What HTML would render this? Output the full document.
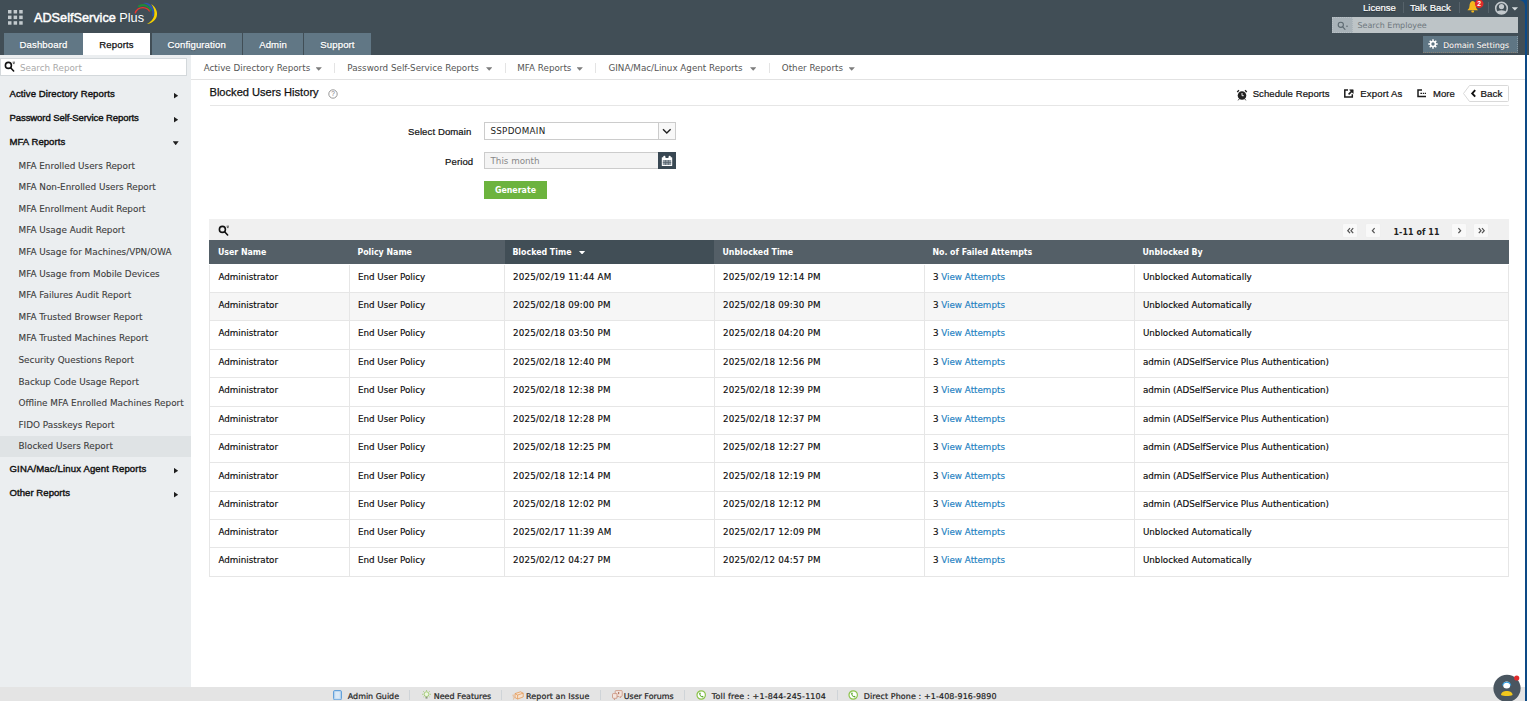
<!DOCTYPE html>
<html lang="en">
<head>
<meta charset="utf-8">
<title>ADSelfService Plus - Blocked Users History</title>
<style>
*{box-sizing:border-box;margin:0;padding:0}
html,body{width:1529px;height:701px;overflow:hidden;background:#fff}
body{position:relative;font-family:"DejaVu Sans","Liberation Sans",sans-serif;font-size:8.76px;color:#222;line-height:1}
.abs{position:absolute;white-space:nowrap}
.lato{font-family:"Liberation Sans","DejaVu Sans",sans-serif}
/* header */
#hdr{position:absolute;left:0;top:0;width:1529px;height:55px;background:linear-gradient(#414e56,#414e56) 0 0/1525px 55px no-repeat,linear-gradient(#414e56,#414e56) 1527px 0/2px 55px no-repeat,#0d4a86}
.tab{position:absolute;top:33px;height:22px;background:#617785;color:#fff;font-family:"Liberation Sans",sans-serif;font-size:9.55px;text-align:center;line-height:24px;letter-spacing:0.12px;-webkit-text-stroke:0.25px #fff;text-shadow:0 0.5px 1px rgba(0,0,0,.35)}
.tab.on{background:#fff;color:#111;-webkit-text-stroke:0.25px #111;text-shadow:none}
/* subnav */
#subnav{position:absolute;left:191px;top:55px;width:1334px;height:25px;background:#fff;border-bottom:1px solid #e2e2e2}
.sn{position:absolute;top:9px;color:#555;white-space:nowrap}
.caret{position:absolute;width:6.4px;height:3.4px;background:#7d7d7d;clip-path:polygon(0 0,100% 0,50% 100%)}
.vsep{position:absolute;top:8px;width:1px;height:9.5px;background:#e4e4e4}
/* sidebar */
#side{position:absolute;left:0;top:55px;width:191px;height:632px;background:#ebeef0}
.sh{position:absolute;left:9.5px;font-family:"Liberation Sans",sans-serif;font-weight:400;font-size:9.55px;letter-spacing:0.05px;color:#111;-webkit-text-stroke:0.4px #111;white-space:nowrap;margin-top:0.4px}
.si{position:absolute;left:18.5px;color:#3c3c3c;-webkit-text-stroke:0.1px #3c3c3c;white-space:nowrap;font-size:8.85px;margin-top:1px}
.arr-r{position:absolute;left:173.8px;width:4.4px;height:5.8px;background:#1e1e1e;clip-path:polygon(0 0,100% 50%,0 100%);margin-top:0.3px}
.arr-d{position:absolute;left:172.7px;width:6px;height:4px;background:#1e1e1e;clip-path:polygon(0 0,100% 0,50% 100%);margin-top:0.2px}
/* table */
#tbl{position:absolute;left:209.4px;top:240.4px;width:1299.6px}
.th{position:absolute;top:-0.4px;height:24px;background:#545f67;color:#fff;font-family:"DejaVu Sans Condensed","DejaVu Sans",sans-serif;font-weight:700;font-size:8.76px;line-height:24.4px;padding-left:8.5px;white-space:nowrap}
.row{position:absolute;left:0;width:1299.6px;height:28.35px;border-bottom:1px solid #e6e6e6;border-left:1px solid #e6e6e6;border-right:1px solid #e6e6e6}
.row span{position:absolute;top:0;height:28.35px;line-height:24.2px;padding-left:8px;border-left:1px solid #e6e6e6;white-space:nowrap;color:#0a0a0a;-webkit-text-stroke:0.15px #0a0a0a}
.row span:first-child{border-left:none;padding-left:9px}
.row.dn span{line-height:26.2px}
.row a{color:#1e7fc2;text-decoration:none;-webkit-text-stroke:0.15px #1e7fc2}
.c1{left:-1px;width:140px}.c2{left:138.5px;width:155px}.c3{left:293.5px;width:210px;letter-spacing:0.2px}.c4{left:503.5px;width:210px;letter-spacing:0.2px}.c5{left:713.5px;width:210px}.c6{left:923.5px;width:374px}
.pg{position:absolute;top:224px;width:14px;height:12.5px;background:#f9f9f9;box-shadow:0 0 0 0.5px #ededed;border-radius:1px}
/* footer */
#ftr{position:absolute;left:0;top:687px;width:1529px;height:14px;background:#e4e4e4}
.ft{position:absolute;top:6px;color:#222;white-space:nowrap;font-size:7.96px;-webkit-text-stroke:0.2px #222}
.fsep{position:absolute;top:3px;width:1px;height:10px;background:#cfd4d8}
</style>
</head>
<body>
<!-- HEADER -->
<div id="hdr">
  <div class="abs" style="left:1515px;top:0;width:10px;height:10px;background:#0d4a86"></div><div class="abs" style="left:1505px;top:0;width:20px;height:20px;background:#414e56;border-top-right-radius:6px"></div>
  <svg class="abs" style="left:7.9px;top:10.2px" width="15" height="15" viewBox="0 0 15 15" fill="#c3cace"><rect x="0" y="0" width="3.5" height="3.5"/><rect x="5.6" y="0" width="3.5" height="3.5"/><rect x="11.2" y="0" width="3.5" height="3.5"/><rect x="0" y="5.6" width="3.5" height="3.5"/><rect x="5.6" y="5.6" width="3.5" height="3.5"/><rect x="11.2" y="5.6" width="3.5" height="3.5"/><rect x="0" y="11.2" width="3.5" height="3.5"/><rect x="5.6" y="11.2" width="3.5" height="3.5"/><rect x="11.2" y="11.2" width="3.5" height="3.5"/></svg>
  <div class="abs lato" style="left:34px;top:10.5px;font-size:12.7px;color:#fff;line-height:15px"><span style="-webkit-text-stroke:0.45px #fff">ADSelfService</span> Plus</div>
  <svg class="abs" style="left:130px;top:0" width="30" height="28" viewBox="130 0 30 28" fill="none">
    <path d="M135.2 13.3 C135.9 9.6 139.6 7.4 143 7.6 C146 7.8 148.5 9.2 149.7 11.3" stroke="#ea352f" stroke-width="1.4"/>
    <path d="M138.2 6.7 C140.5 4.9 144 4.6 146.6 5.9 C148.9 7.1 150.3 8.8 151 10.9" stroke="#1f8b3a" stroke-width="1.9"/>
    <path d="M143 3 C147 2.3 151.2 4.1 153.4 7.9 C154.9 10.6 154.8 13.8 153.7 16.5 L152.1 16 C152.8 13 152.3 10.5 150.7 8.1 C148.9 5.4 146.2 3.9 143 3Z" fill="#2d56ab"/>
    <path d="M151.2 4 C155.6 7 158.1 12 156.7 16.5 C155.4 20.7 151.5 23.4 147 24 C151 22 153.5 19 154.2 15.5 C155 11.5 153.8 7.4 151.2 4Z" fill="#f4d000"/>
  </svg>
  <div class="tab" style="left:4px;width:79px">Dashboard</div>
  <div class="tab on" style="left:83px;width:67px">Reports</div>
  <div class="tab" style="left:151.5px;width:90.5px">Configuration</div>
  <div class="tab" style="left:243px;width:60px">Admin</div>
  <div class="tab" style="left:304px;width:67px">Support</div>

  <div class="abs lato" style="left:1363px;top:2px;font-size:9.55px;color:#fff;line-height:11px;-webkit-text-stroke:0.2px #fff;text-shadow:0 0.5px 1px rgba(0,0,0,.4)">License</div>
  <div class="abs" style="left:1402.5px;top:2px;width:1px;height:11px;background:#56626a"></div>
  <div class="abs lato" style="left:1410px;top:2px;font-size:9.55px;color:#fff;line-height:11px;-webkit-text-stroke:0.2px #fff;text-shadow:0 0.5px 1px rgba(0,0,0,.4)">Talk Back</div>
  <div class="abs" style="left:1459px;top:2px;width:1px;height:11px;background:#56626a"></div>
  <!-- bell -->
  <svg class="abs" style="left:1466px;top:0" width="20" height="14" viewBox="0 0 20 14">
    <path d="M6.7 1 C4.3 1.4 3.6 3.6 3.5 5.8 C3.4 8 2.6 9.2 1.4 10.2 L12 10.2 C10.8 9.2 10 8 9.9 5.8 C9.8 3.6 9.1 1.4 6.7 1Z" fill="#f5b81c"/>
    <rect x="5.3" y="10.6" width="2.8" height="1.8" rx="0.9" fill="#f5b81c"/>
    <circle cx="13.2" cy="3.8" r="4.3" fill="#e02b2b"/>
    <text x="13.2" y="6.2" font-family="Liberation Sans, sans-serif" font-size="6.8" font-weight="700" fill="#fff" text-anchor="middle">2</text>
  </svg>
  <div class="abs" style="left:1488px;top:2px;width:1px;height:11px;background:#56626a"></div>
  <!-- user -->
  <svg class="abs" style="left:1494px;top:1px" width="15" height="15" viewBox="0 0 15 15">
    <circle cx="7.5" cy="7.2" r="5.8" fill="none" stroke="#c3c9cd" stroke-width="1.6"/>
    <circle cx="7.5" cy="5.6" r="2.6" fill="#c3c9cd"/>
    <path d="M2.8 11.4 C3.6 8.4 11.4 8.4 12.2 11.4 C10.6 13.4 4.4 13.4 2.8 11.4Z" fill="#c3c9cd"/>
  </svg>
  <div class="caret" style="left:1511.7px;top:7.2px;background:#d5dadd;width:6.4px;height:3.4px"></div>
  <!-- search employee -->
  <div class="abs" style="left:1332px;top:17px;width:185.5px;height:15.7px;background:#bdc4c7"></div>
  <div class="abs" style="left:1332px;top:17px;width:20.5px;height:15.7px;background:#a9b3b9;border:1px dotted #b9c1c6"></div>
  <svg class="abs" style="left:1337px;top:20.5px" width="12" height="10" viewBox="0 0 12 10" fill="none" stroke="#5d6a72" stroke-width="1.1">
    <circle cx="3.8" cy="3.8" r="2.6"/><path d="M5.7 5.8 L8 8.3" stroke-linecap="round"/><path d="M9 5.2 L11 5.2" stroke-width="0.9"/>
  </svg>
  <div class="abs" style="left:1357.5px;top:22px;color:#6d777d;font-size:7.96px">Search Employee</div>
  <!-- domain settings -->
  <div class="abs" style="left:1423px;top:36px;width:94.5px;height:16.5px;background:#5f7684;border-bottom:1px dotted #8c8273;border-right:1px dotted #8698a3"></div>
  <svg class="abs" style="left:1427.8px;top:39.2px" width="10" height="10" viewBox="0 0 10 10">
    <g stroke="#fff" stroke-width="1.5" stroke-linecap="butt">
      <path d="M5 0.3V9.7M0.3 5H9.7M1.7 1.7L8.3 8.3M8.3 1.7L1.7 8.3"/>
    </g>
    <circle cx="5" cy="5" r="3.2" fill="#fff"/><circle cx="5" cy="5" r="1.7" fill="#5f7684"/>
  </svg>
  <div class="abs" style="left:1443px;top:41.5px;color:#fff;font-size:7.96px;text-shadow:0 0 1px #223,0.4px 0.4px 0 rgba(255,255,255,.6)">Domain Settings</div>
</div>

<!-- SIDEBAR -->
<div id="side">
  <div class="abs" style="left:0;top:3px;width:187px;height:18px;background:#fff;border:1px solid #d3d8db"></div>
  <svg class="abs" style="left:3.6px;top:6.3px" width="12" height="11" viewBox="0 0 12 11" fill="none" stroke="#111" stroke-width="1.6">
    <circle cx="4.4" cy="4.4" r="3"/><path d="M6.6 6.8 L9.6 10" stroke-linecap="round"/><path d="M8.6 1.2 H11 M8.9 2.6 H10.6" stroke-width="0.7"/>
  </svg>
  <div class="abs" style="left:20px;top:9px;color:#a9a9a9;font-size:8.76px">Search Report</div>

  <div class="sh" style="top:34px;letter-spacing:0.1px">Active Directory Reports</div><div class="arr-r" style="top:37.5px"></div>
  <div class="sh" style="top:58px;letter-spacing:-0.1px">Password Self-Service Reports</div><div class="arr-r" style="top:61.5px"></div>
  <div class="sh" style="top:82px">MFA Reports</div><div class="arr-d" style="top:86px"></div>

  <div class="si" style="top:105.5px">MFA Enrolled Users Report</div>
  <div class="si" style="top:127.1px">MFA Non-Enrolled Users Report</div>
  <div class="si" style="top:148.7px">MFA Enrollment Audit Report</div>
  <div class="si" style="top:170.3px">MFA Usage Audit Report</div>
  <div class="si" style="top:191.9px">MFA Usage for Machines/VPN/OWA</div>
  <div class="si" style="top:213.5px">MFA Usage from Mobile Devices</div>
  <div class="si" style="top:235.1px">MFA Failures Audit Report</div>
  <div class="si" style="top:256.7px">MFA Trusted Browser Report</div>
  <div class="si" style="top:278.3px">MFA Trusted Machines Report</div>
  <div class="si" style="top:299.9px">Security Questions Report</div>
  <div class="si" style="top:321.5px">Backup Code Usage Report</div>
  <div class="si" style="top:343.1px">Offline MFA Enrolled Machines Report</div>
  <div class="si" style="top:364.7px">FIDO Passkeys Report</div>
  <div class="abs" style="left:0;top:380.5px;width:191px;height:21px;background:#dfe3e5"></div>
  <div class="si" style="top:386.3px">Blocked Users Report</div>

  <div class="sh" style="top:409px;letter-spacing:0.15px">GINA/Mac/Linux Agent Reports</div><div class="arr-r" style="top:412.5px"></div>
  <div class="sh" style="top:433px">Other Reports</div><div class="arr-r" style="top:436.5px"></div>
</div>

<!-- SUBNAV -->
<div id="subnav">
  <div class="sn" style="left:12.7px">Active Directory Reports</div><div class="caret" style="left:124.5px;top:12.3px"></div>
  <div class="vsep" style="left:143px"></div>
  <div class="sn" style="left:156.3px">Password Self-Service Reports</div><div class="caret" style="left:295px;top:12.3px"></div>
  <div class="vsep" style="left:314px"></div>
  <div class="sn" style="left:326.3px">MFA Reports</div><div class="caret" style="left:385.5px;top:12.3px"></div>
  <div class="vsep" style="left:404px"></div>
  <div class="sn" style="left:417.5px">GINA/Mac/Linux Agent Reports</div><div class="caret" style="left:559px;top:12.3px"></div>
  <div class="vsep" style="left:578px"></div>
  <div class="sn" style="left:590.8px">Other Reports</div><div class="caret" style="left:657.5px;top:12.3px"></div>
</div>

<!-- TITLE BAR -->
<div class="abs lato" style="left:209.5px;top:85px;font-size:11.1px;color:#111;line-height:14px;-webkit-text-stroke:0.25px #111">Blocked Users History</div>
<svg class="abs" style="left:328px;top:88.6px" width="10" height="10" viewBox="0 0 10 10">
  <circle cx="5" cy="5" r="4.2" fill="none" stroke="#8c8c8c" stroke-width="0.9"/>
  <text x="5" y="7.4" font-family="Liberation Sans, sans-serif" font-size="6.5" fill="#777" text-anchor="middle">?</text>
</svg>
<div class="abs" style="left:210px;top:105px;width:1299px;height:1px;background:#e6e6e6"></div>

<!-- schedule reports -->
<svg class="abs" style="left:1236px;top:89px" width="12" height="12" viewBox="0 0 12 12">
  <circle cx="6" cy="6.5" r="4.3" fill="#222"/>
  <path d="M1.2 3 L3 1.2 M10.8 3 L9 1.2" stroke="#222" stroke-width="1.3"/>
  <path d="M3 10.2 L2.2 11.3 M9 10.2 L9.8 11.3" stroke="#222" stroke-width="1"/>
  <path d="M6 4 V6.7 H7.8" stroke="#fff" stroke-width="0.9" fill="none"/>
</svg>
<div class="abs lato" style="left:1252.7px;top:88.4px;font-size:9.55px;color:#111;line-height:11px;-webkit-text-stroke:0.2px #111;letter-spacing:0.06px">Schedule Reports</div>
<svg class="abs" style="left:1344.3px;top:89.2px" width="10" height="9" viewBox="0 0 10 9" fill="none" stroke="#1c1c1c" stroke-width="1.5">
  <path d="M4 0.9 H0.8 V8.1 H8.3 V5.2"/><path d="M5.6 0.8 H9.2 V4.4 Z" fill="#1c1c1c" stroke-width="0.6"/><path d="M8.4 1.6 L4.6 5.4"/>
</svg>
<div class="abs lato" style="left:1360.3px;top:88.4px;font-size:9.55px;color:#111;line-height:11px;-webkit-text-stroke:0.2px #111;letter-spacing:0.15px">Export As</div>
<svg class="abs" style="left:1417.2px;top:89.4px" width="10" height="9" viewBox="0 0 10 9" fill="none" stroke="#1c1c1c" stroke-width="1.5">
  <path d="M5 1 H1 V7.4 H9"/><path d="M3.4 4.3 H5 M5.8 4.3 H7.2 M7.9 4.3 H9" stroke-width="1.3"/>
</svg>
<div class="abs lato" style="left:1433px;top:88.4px;font-size:9.55px;color:#111;line-height:11px;-webkit-text-stroke:0.2px #111">More</div>
<!-- back -->
<svg class="abs" style="left:1462px;top:85px" width="48" height="17" viewBox="0 0 48 17">
  <path d="M7.5 0.5 H45.5 Q46.5 0.5 46.5 1.5 V15.5 Q46.5 16.5 45.5 16.5 H7.5 L1.5 8.5 Z" fill="#fff" stroke="#d9d9d9" stroke-width="1"/>
  <path d="M13.2 5.2 L10.2 8.4 L13.2 11.6" fill="none" stroke="#111" stroke-width="1.9"/>
</svg>
<div class="abs lato" style="left:1480.5px;top:88px;font-size:9.8px;color:#111;line-height:11px;-webkit-text-stroke:0.2px #111">Back</div>

<!-- FORM -->
<div class="abs lato" style="left:408px;top:126px;font-size:9.55px;color:#111;line-height:11px;-webkit-text-stroke:0.2px #111;letter-spacing:0.1px">Select Domain</div>
<div class="abs" style="left:484px;top:122px;width:192px;height:18px;background:#fff;border:1px solid #ccc"></div>
<div class="abs" style="left:658px;top:122px;width:18px;height:18px;background:#f8f8f8;border:1px solid #ccc"></div>
<svg class="abs" style="left:662.3px;top:127.8px" width="10" height="7" viewBox="0 0 10 7"><path d="M1 1.2 L4.8 5 L8.6 1.2" fill="none" stroke="#222" stroke-width="1.4"/></svg>
<div class="abs" style="left:490.5px;top:126.5px;color:#222;letter-spacing:0.25px">SSPDOMAIN</div>

<div class="abs lato" style="left:445px;top:155.5px;font-size:9.55px;color:#111;line-height:11px;-webkit-text-stroke:0.2px #111;letter-spacing:0.1px">Period</div>
<div class="abs" style="left:484px;top:152px;width:175px;height:17px;background:#f4f4f4;border:1px solid #ccc"></div>
<div class="abs" style="left:658px;top:152px;width:18px;height:17px;background:#394853"></div>
<svg class="abs" style="left:661px;top:154.6px" width="12" height="12" viewBox="0 0 12 12">
  <rect x="0.8" y="2.2" width="10.4" height="8.8" rx="0.6" fill="#fff"/>
  <rect x="1.8" y="5" width="8.4" height="5" fill="#8f9aa3"/>
  <path d="M1.8 7.5 H10.2 M4.6 5 V10 M7.4 5 V10" stroke="#56636d" stroke-width="0.7"/>
  <circle cx="3.4" cy="2" r="1.2" fill="#fff"/><circle cx="8.6" cy="2" r="1.2" fill="#fff"/>
  <rect x="4.6" y="1" width="2.8" height="2" fill="#394853"/>
</svg>
<div class="abs" style="left:490.5px;top:156.7px;color:#888">This month</div>

<div class="abs" style="left:484px;top:181.3px;width:63px;height:17.7px;background:#6cb33e;color:#fff;font-family:'DejaVu Sans Condensed','DejaVu Sans',sans-serif;font-weight:700;font-size:8.76px;text-align:center;line-height:19.5px">Generate</div>

<!-- TABLE TOOLBAR -->
<div class="abs" style="left:209.4px;top:219px;width:1299.6px;height:22px;background:#f0f0f0"></div>
<svg class="abs" style="left:217.7px;top:225.4px" width="12" height="11" viewBox="0 0 12 11" fill="none" stroke="#111" stroke-width="1.6">
  <circle cx="4.4" cy="4.4" r="3"/><path d="M6.6 6.8 L9.6 10" stroke-linecap="round"/><path d="M8.6 1.2 H11 M8.9 2.6 H10.6" stroke-width="0.7"/>
</svg>
<div class="pg" style="left:1343.3px"><svg width="12" height="10" viewBox="-2 -2.2 12 10" style="position:absolute;left:0;top:0"><path d="M5 2 L2.8 4.5 L5 7 M8.2 2 L6 4.5 L8.2 7" fill="none" stroke="#555" stroke-width="1.25"/></svg></div>
<div class="pg" style="left:1366px"><svg width="12" height="10" viewBox="-2 -2.2 12 10" style="position:absolute;left:0;top:0"><path d="M6.6 2 L4.4 4.5 L6.6 7" fill="none" stroke="#555" stroke-width="1.25"/></svg></div>
<div class="abs" style="left:1393.5px;top:227.6px;color:#222;font-family:'DejaVu Sans Condensed','DejaVu Sans',sans-serif;font-weight:700;font-size:8.76px;letter-spacing:0.1px">1-11 of 11</div>
<div class="pg" style="left:1451.5px"><svg width="12" height="10" viewBox="-2 -2.2 12 10" style="position:absolute;left:0;top:0"><path d="M4.4 2 L6.6 4.5 L4.4 7" fill="none" stroke="#555" stroke-width="1.25"/></svg></div>
<div class="pg" style="left:1473.7px"><svg width="12" height="10" viewBox="-2 -2.2 12 10" style="position:absolute;left:0;top:0"><path d="M2.8 2 L5 4.5 L2.8 7 M6 2 L8.2 4.5 L6 7" fill="none" stroke="#555" stroke-width="1.25"/></svg></div>

<!-- TABLE -->
<div id="tbl">
  <div class="th" style="left:0;width:1299.6px"></div>
  <div class="th" style="left:0;width:140px">User Name</div>
  <div class="th" style="left:139.5px;width:155px">Policy Name</div>
  <div class="th" style="left:295.6px;width:210.3px;background:#414e56;padding-left:7.4px">Blocked Time<i class="caret" style="left:73.8px;top:10.7px;background:#fff;width:6.6px;height:3.8px"></i></div>
  <div class="th" style="left:504.5px;width:210px">Unblocked Time</div>
  <div class="th" style="left:714.5px;width:210px">No. of Failed Attempts</div>
  <div class="th" style="left:924.5px;width:375.1px">Unblocked By</div>

  <div class="row" style="top:24.4px"><span class="c1">Administrator</span><span class="c2">End User Policy</span><span class="c3">2025/02/19 11:44 AM</span><span class="c4">2025/02/19 12:14 PM</span><span class="c5">3 <a>View Attempts</a></span><span class="c6">Unblocked Automatically</span></div>
  <div class="row" style="top:52.75px;background:#f6f6f6"><span class="c1">Administrator</span><span class="c2">End User Policy</span><span class="c3">2025/02/18 09:00 PM</span><span class="c4">2025/02/18 09:30 PM</span><span class="c5">3 <a>View Attempts</a></span><span class="c6">Unblocked Automatically</span></div>
  <div class="row" style="top:81.1px"><span class="c1">Administrator</span><span class="c2">End User Policy</span><span class="c3">2025/02/18 03:50 PM</span><span class="c4">2025/02/18 04:20 PM</span><span class="c5">3 <a>View Attempts</a></span><span class="c6">Unblocked Automatically</span></div>
  <div class="row" style="top:109.45px"><span class="c1">Administrator</span><span class="c2">End User Policy</span><span class="c3">2025/02/18 12:40 PM</span><span class="c4">2025/02/18 12:56 PM</span><span class="c5">3 <a>View Attempts</a></span><span class="c6">admin (ADSelfService Plus Authentication)</span></div>
  <div class="row" style="top:137.8px"><span class="c1">Administrator</span><span class="c2">End User Policy</span><span class="c3">2025/02/18 12:38 PM</span><span class="c4">2025/02/18 12:39 PM</span><span class="c5">3 <a>View Attempts</a></span><span class="c6">admin (ADSelfService Plus Authentication)</span></div>
  <div class="row" style="top:166.15px"><span class="c1">Administrator</span><span class="c2">End User Policy</span><span class="c3">2025/02/18 12:28 PM</span><span class="c4">2025/02/18 12:37 PM</span><span class="c5">3 <a>View Attempts</a></span><span class="c6">admin (ADSelfService Plus Authentication)</span></div>
  <div class="row" style="top:194.5px"><span class="c1">Administrator</span><span class="c2">End User Policy</span><span class="c3">2025/02/18 12:25 PM</span><span class="c4">2025/02/18 12:27 PM</span><span class="c5">3 <a>View Attempts</a></span><span class="c6">admin (ADSelfService Plus Authentication)</span></div>
  <div class="row dn" style="top:222.85px"><span class="c1">Administrator</span><span class="c2">End User Policy</span><span class="c3">2025/02/18 12:14 PM</span><span class="c4">2025/02/18 12:19 PM</span><span class="c5">3 <a>View Attempts</a></span><span class="c6">admin (ADSelfService Plus Authentication)</span></div>
  <div class="row" style="top:251.2px"><span class="c1">Administrator</span><span class="c2">End User Policy</span><span class="c3">2025/02/18 12:02 PM</span><span class="c4">2025/02/18 12:12 PM</span><span class="c5">3 <a>View Attempts</a></span><span class="c6">admin (ADSelfService Plus Authentication)</span></div>
  <div class="row" style="top:279.55px"><span class="c1">Administrator</span><span class="c2">End User Policy</span><span class="c3">2025/02/17 11:39 AM</span><span class="c4">2025/02/17 12:09 PM</span><span class="c5">3 <a>View Attempts</a></span><span class="c6">Unblocked Automatically</span></div>
  <div class="row" style="top:307.9px"><span class="c1">Administrator</span><span class="c2">End User Policy</span><span class="c3">2025/02/12 04:27 PM</span><span class="c4">2025/02/12 04:57 PM</span><span class="c5">3 <a>View Attempts</a></span><span class="c6">Unblocked Automatically</span></div>
</div>

<!-- FOOTER -->
<div id="ftr">
  <svg class="abs" style="left:333px;top:3px" width="9" height="10.4" viewBox="0 0 9 10.4"><rect x="0.5" y="0.5" width="8" height="9.4" rx="1.4" fill="#b5d3ee" stroke="#62a0da" stroke-width="1"/><rect x="2.2" y="1.8" width="4.6" height="6.8" fill="#dbe9f6"/></svg>
  <svg class="abs" style="left:422px;top:3px" width="9" height="10" viewBox="0 0 9 10"><g stroke="#8cc152" stroke-width="0.6"><path d="M4.5 0V1.3M1.2 1.2L2.1 2.1M7.8 1.2L6.9 2.1M0 4.3H1.2M9 4.3H7.8M1.4 7L2.2 6.3M7.6 7L6.8 6.3"/></g><circle cx="4.5" cy="4.2" r="2.4" fill="#eef7e2" stroke="#8cc152" stroke-width="0.7"/><rect x="3.5" y="6.8" width="2" height="1.8" fill="#8a9a7a"/></svg>
  <svg class="abs" style="left:512px;top:3.5px" width="12" height="9" viewBox="0 0 12 9" fill="none" stroke="#e59a58" stroke-width="0.8"><path d="M3 2.6 L8.5 0.8 L11.2 2.2 L11.2 6 L5.6 8 L3 6.6 Z" fill="#f6e3d2"/><path d="M3 2.6 L5.6 4 L11.2 2.2 M5.6 4 V8"/><path d="M0.4 4.2 H2 M0.8 5.8 H2.2 M1.4 8.6 L2.4 6.2" stroke-width="0.6"/></svg>
  <svg class="abs" style="left:612px;top:2.5px" width="11" height="11" viewBox="0 0 11 11" fill="#f3e6e0" stroke="#c9907c" stroke-width="0.8"><path d="M4 0.6 H9.4 Q10.2 0.6 10.2 1.4 V5.6 Q10.2 6.4 9.4 6.4 H8.6 V8 L7 6.4 H4 Q3.2 6.4 3.2 5.6 V1.4 Q3.2 0.6 4 0.6Z"/><path d="M1.2 3.6 H5 V8.2 H3.4 L2.4 9.8 V8.2 H1.2 Q0.5 8.2 0.5 7.5 V4.3 Q0.5 3.6 1.2 3.6Z"/><path d="M6.7 2 V4.2" stroke="#a5634c" stroke-width="1"/></svg>
  <svg class="abs" style="left:696px;top:3px" width="10.4" height="10" viewBox="0 0 10.4 10"><circle cx="5.2" cy="5" r="4.2" fill="#fff" stroke="#8bc34a" stroke-width="1.2"/><path d="M3.3 2.8 C2.6 4.6 4.8 7.4 7 7.5 L7.6 6.5 L6.4 5.8 L5.9 6.3 C5.2 6 4.4 5 4.3 4.3 L4.9 3.9 L4.3 2.6 Z" fill="#5cab2e"/></svg>
  <svg class="abs" style="left:848px;top:3px" width="10.4" height="10" viewBox="0 0 10.4 10"><circle cx="5.2" cy="5" r="4.2" fill="#fff" stroke="#8bc34a" stroke-width="1.2"/><path d="M3.3 2.8 C2.6 4.6 4.8 7.4 7 7.5 L7.6 6.5 L6.4 5.8 L5.9 6.3 C5.2 6 4.4 5 4.3 4.3 L4.9 3.9 L4.3 2.6 Z" fill="#5cab2e"/></svg>
  <div class="ft" style="left:347.8px">Admin Guide</div>
  <div class="fsep" style="left:409px"></div>
  <div class="ft" style="left:433.7px">Need Features</div>
  <div class="fsep" style="left:500.8px"></div>
  <div class="ft" style="left:526px;letter-spacing:0.1px">Report an Issue</div>
  <div class="fsep" style="left:599.5px"></div>
  <div class="ft" style="left:623.7px">User Forums</div>
  <div class="fsep" style="left:684.2px"></div>
  <div class="ft" style="left:711.8px;letter-spacing:0.17px">Toll free : +1-844-245-1104</div>
  <div class="fsep" style="left:836.6px"></div>
  <div class="ft" style="left:863.7px;letter-spacing:0.11px">Direct Phone : +1-408-916-9890</div>
</div>

<!-- right edge -->
<div class="abs" style="left:1525px;top:0;width:2px;height:701px;background:#0d4a86"></div>
<div class="abs" style="left:1527px;top:55px;width:2px;height:646px;background:#fff"></div>

<!-- chat bubble -->
<svg class="abs" style="left:1490px;top:671px" width="34" height="30" viewBox="0 0 34 30">
  <circle cx="17" cy="17.3" r="13.6" fill="#4a5660"/>
  <circle cx="16.7" cy="14" r="3.6" fill="#fff"/>
  <path d="M12.6 14.5 A4.2 4.2 0 0 1 20.8 14.5" fill="none" stroke="#2b9be0" stroke-width="1.1"/>
  <path d="M11 24 C11 18.5 22.6 18.5 22.6 24 C20 25.3 13.6 25.3 11 24Z" fill="#f2c81e"/>
  <circle cx="26.7" cy="7" r="2.6" fill="#e02b2b"/>
</svg>
</body>
</html>
